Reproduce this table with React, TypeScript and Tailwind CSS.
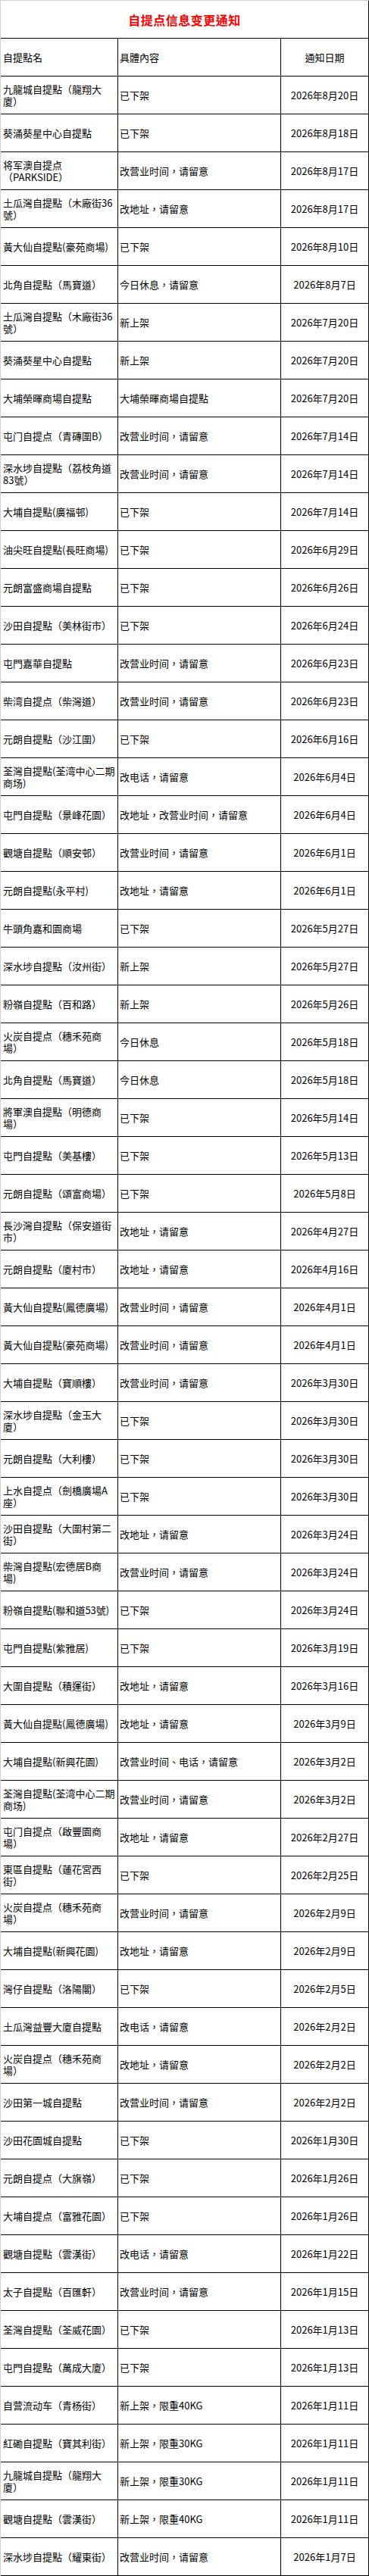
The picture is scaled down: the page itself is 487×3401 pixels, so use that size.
import React from "react";

type Row = [string, string, string];

const rows: Row[] = [
  ["九龍城自提點（龍翔大\n廈）", "已下架", "2026年8月20日"],
  ["葵涌葵星中心自提點", "已下架", "2026年8月18日"],
  ["将军澳自提点\n（PARKSIDE）", "改营业时间，请留意", "2026年8月17日"],
  ["土瓜灣自提點（木廠街36\n號）", "改地址，请留意", "2026年8月17日"],
  ["黃大仙自提點(豪苑商場)", "已下架", "2026年8月10日"],
  ["北角自提點（馬寶道）", "今日休息，请留意", "2026年8月7日"],
  ["土瓜灣自提點（木廠街36\n號）", "新上架", "2026年7月20日"],
  ["葵涌葵星中心自提點", "新上架", "2026年7月20日"],
  ["大埔榮暉商場自提點", "大埔榮暉商場自提點", "2026年7月20日"],
  ["屯门自提点（青磚圍B）", "改营业时间，请留意", "2026年7月14日"],
  ["深水埗自提點（荔枝角道\n83號）", "改营业时间，请留意", "2026年7月14日"],
  ["大埔自提點(廣福邨)", "已下架", "2026年7月14日"],
  ["油尖旺自提點(長旺商場)", "已下架", "2026年6月29日"],
  ["元朗富盛商場自提點", "已下架", "2026年6月26日"],
  ["沙田自提點（美林街市）", "已下架", "2026年6月24日"],
  ["屯門嘉華自提點", "改营业时间，请留意", "2026年6月23日"],
  ["柴湾自提点（柴灣道）", "改营业时间，请留意", "2026年6月23日"],
  ["元朗自提點（沙江圍）", "已下架", "2026年6月16日"],
  ["荃灣自提點(荃湾中心二期\n商场)", "改电话，请留意", "2026年6月4日"],
  ["屯門自提點（景峰花園）", "改地址，改营业时间，请留意", "2026年6月4日"],
  ["觀塘自提點（順安邨）", "改营业时间，请留意", "2026年6月1日"],
  ["元朗自提點(永平村)", "改地址，请留意", "2026年6月1日"],
  ["牛頭角嘉和園商場", "已下架", "2026年5月27日"],
  ["深水埗自提點（汝州街）", "新上架", "2026年5月27日"],
  ["粉嶺自提點（百和路）", "新上架", "2026年5月26日"],
  ["火炭自提点（穗禾苑商\n場）", "今日休息", "2026年5月18日"],
  ["北角自提點（馬寶道）", "今日休息", "2026年5月18日"],
  ["將軍澳自提點（明德商\n場）", "已下架", "2026年5月14日"],
  ["屯門自提點（美基樓）", "已下架", "2026年5月13日"],
  ["元朗自提點（頌富商場）", "已下架", "2026年5月8日"],
  ["長沙灣自提點（保安道街\n市）", "改地址，请留意", "2026年4月27日"],
  ["元朗自提點（廈村市）", "改地址，请留意", "2026年4月16日"],
  ["黃大仙自提點(鳳德廣場)", "改营业时间，请留意", "2026年4月1日"],
  ["黃大仙自提點(豪苑商場)", "改营业时间，请留意", "2026年4月1日"],
  ["大埔自提點（寶順樓）", "改营业时间，请留意", "2026年3月30日"],
  ["深水埗自提點（金玉大\n廈）", "已下架", "2026年3月30日"],
  ["元朗自提點（大利樓）", "已下架", "2026年3月30日"],
  ["上水自提点（劍橋廣場A\n座）", "已下架", "2026年3月30日"],
  ["沙田自提點（大圍村第二\n街）", "改地址，请留意", "2026年3月24日"],
  ["柴灣自提點(宏德居B商\n場)", "改营业时间，请留意", "2026年3月24日"],
  ["粉嶺自提點(聯和道53號)", "已下架", "2026年3月24日"],
  ["屯門自提點(紫雅居)", "已下架", "2026年3月19日"],
  ["大圍自提點（積運街）", "改地址，请留意", "2026年3月16日"],
  ["黃大仙自提點(鳳德廣場)", "改地址，请留意", "2026年3月9日"],
  ["大埔自提點(新興花園)", "改营业时间、电话，请留意", "2026年3月2日"],
  ["荃灣自提點(荃湾中心二期\n商场)", "改营业时间，请留意", "2026年3月2日"],
  ["屯门自提点（啟豐園商\n場）", "改地址，请留意", "2026年2月27日"],
  ["東區自提點（蓮花宮西\n街）", "已下架", "2026年2月25日"],
  ["火炭自提点（穗禾苑商\n場）", "改营业时间，请留意", "2026年2月9日"],
  ["大埔自提點(新興花園)", "改地址，请留意", "2026年2月9日"],
  ["灣仔自提點（洛陽閣）", "已下架", "2026年2月5日"],
  ["土瓜灣益豐大廈自提點", "改电话，请留意", "2026年2月2日"],
  ["火炭自提点（穗禾苑商\n場）", "改地址，请留意", "2026年2月2日"],
  ["沙田第一城自提點", "改营业时间，请留意", "2026年2月2日"],
  ["沙田花園城自提點", "已下架", "2026年1月30日"],
  ["元朗自提点（大旗嶺）", "已下架", "2026年1月26日"],
  ["大埔自提点（富雅花園）", "已下架", "2026年1月26日"],
  ["觀塘自提點（雲漢街）", "改电话，请留意", "2026年1月22日"],
  ["太子自提點（百匯軒）", "改营业时间，请留意", "2026年1月15日"],
  ["荃灣自提點（荃威花園）", "已下架", "2026年1月13日"],
  ["屯門自提點（萬成大廈）", "已下架", "2026年1月13日"],
  ["自营流动车（青杨街）", "新上架，限重40KG", "2026年1月11日"],
  ["紅磡自提點（寶其利街）", "新上架，限重30KG", "2026年1月11日"],
  ["九龍城自提點（龍翔大\n廈）", "新上架，限重30KG", "2026年1月11日"],
  ["觀塘自提點（雲漢街）", "新上架，限重40KG", "2026年1月11日"],
  ["深水埗自提點（耀東街）", "改营业时间，请留意", "2026年1月7日"],
];

const font = {
  fontFamily: '"Noto Sans CJK TC", "Noto Sans CJK SC", sans-serif',
};

function Cell({
  children,
  w,
  center,
  pl,
}: {
  children: React.ReactNode;
  w: string;
  center?: boolean;
  pl?: string;
}) {
  return (
    <div
      className={`${w} h-[50px] shrink-0 border-r border-b border-black flex items-center ${
        center ? "justify-center" : "justify-start"
      } ${pl ?? ""} overflow-visible`}
    >
      {children}
    </div>
  );
}

export default function App() {
  return (
    <div
      className="w-[487px] bg-white text-black border-t border-l border-[#d0d0d0]"
      style={font}
    >
      <div className="h-[50px] w-[486px] border-r border-b border-black flex items-center justify-center">
        <span className="text-[16px] font-bold text-[#ff0000] tracking-[0.5px]">
          自提点信息变更通知
        </span>
      </div>
      <div className="flex text-[13px] leading-[16px]">
        <Cell w="w-[155px]" pl="pl-[3px]">
          <span>自提點名</span>
        </Cell>
        <Cell w="w-[215px]" pl="pl-[2px]">
          <span>具體內容</span>
        </Cell>
        <Cell w="w-[116px]" center>
          <span>通知日期</span>
        </Cell>
      </div>
      {rows.map(([name, content, date], i) => (
        <div key={i} className="flex text-[13px] leading-[16px]">
          <Cell w="w-[155px]" pl="pl-[3px]">
            <span className="whitespace-pre">{name}</span>
          </Cell>
          <Cell w="w-[215px]" pl="pl-[2px]">
            <span className="whitespace-pre">{content}</span>
          </Cell>
          <Cell w="w-[116px]" center>
            <span className="whitespace-pre">{date}</span>
          </Cell>
        </div>
      ))}
    </div>
  );
}
